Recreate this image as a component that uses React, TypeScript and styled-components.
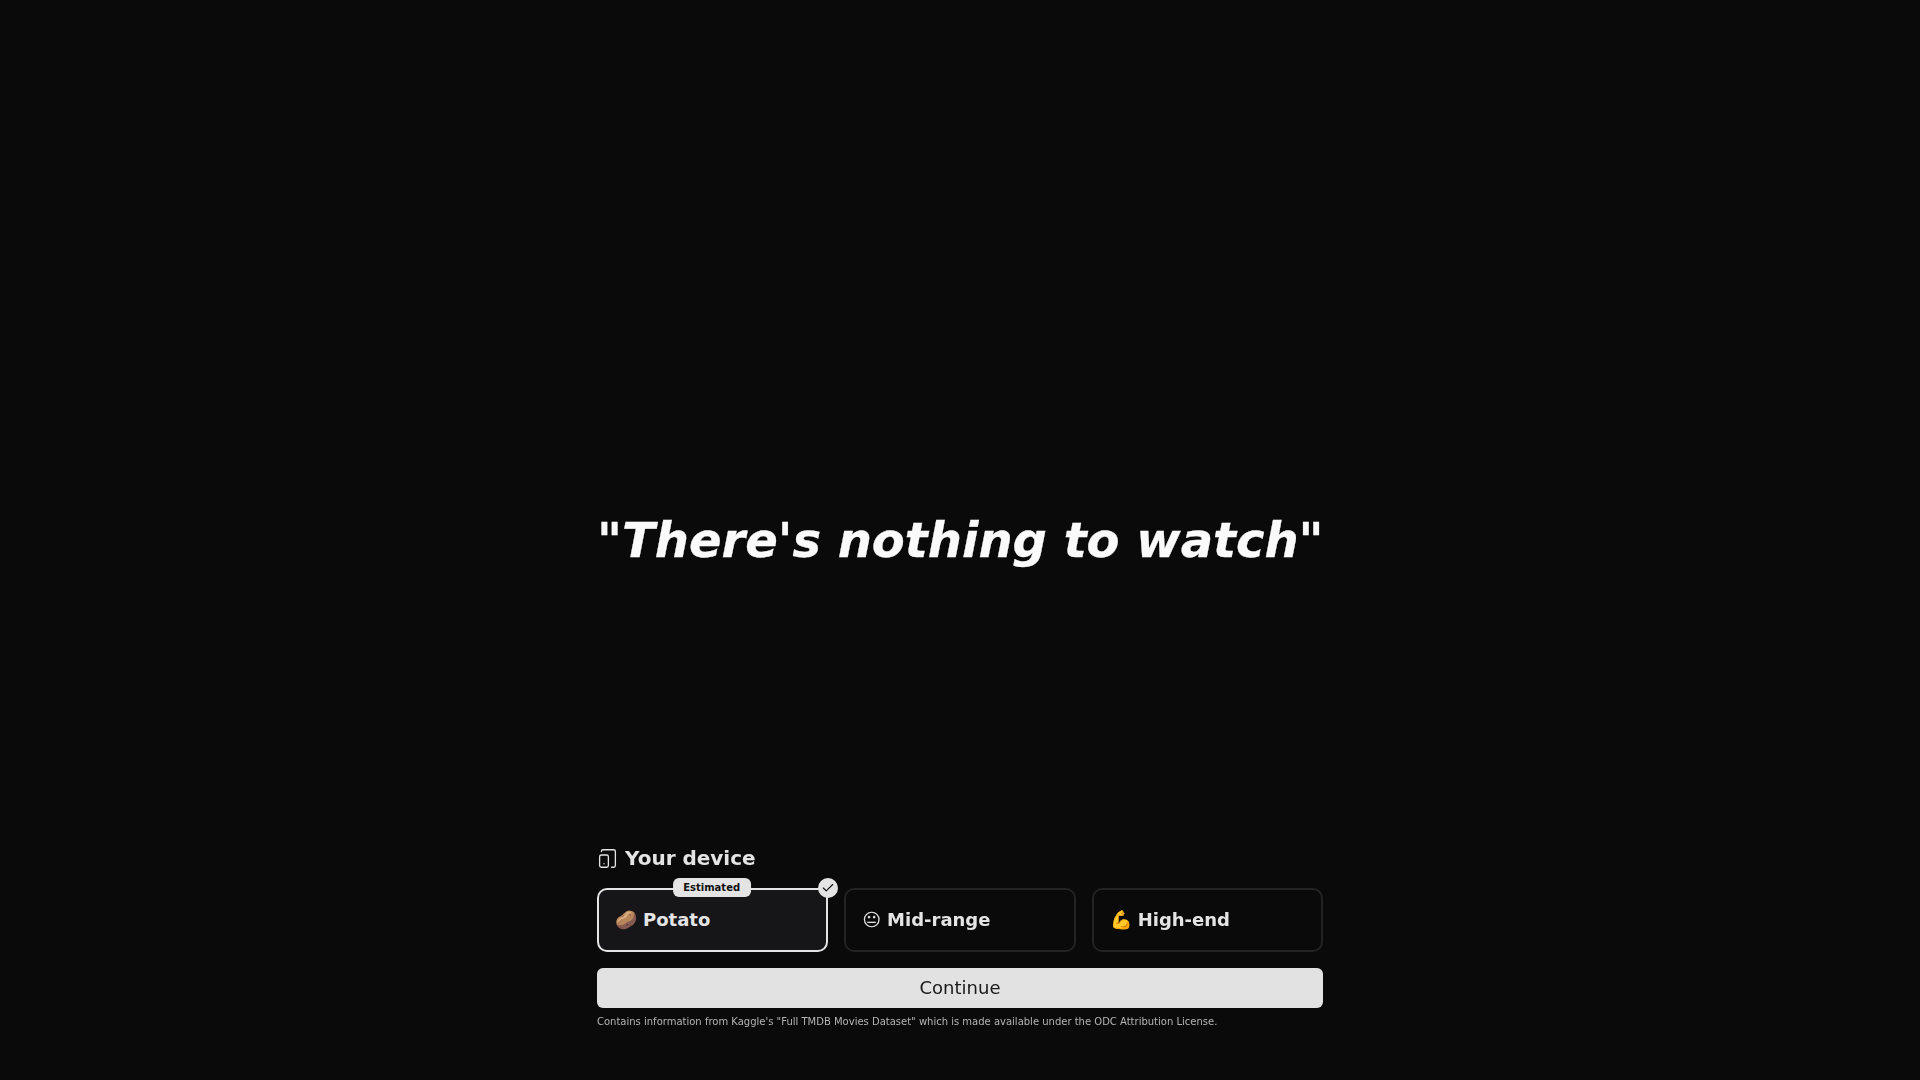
import { Check, TabletSmartphone } from "lucide-react";
import styled, { createGlobalStyle } from "styled-components";

const GlobalStyle = createGlobalStyle`
  html, body {
    margin: 0;
    background: #0a0a0a;
    color: #e4e4e4;
    font-family: "DejaVu Sans", sans-serif;
  }
  * {
    box-sizing: border-box;
  }
`;

const Page = styled.main`
  height: 100vh;
  display: grid;
  grid-template-rows: 1fr auto 1fr;
  justify-items: center;
  will-change: opacity;
`;

const Title = styled.h1`
  grid-row: 2;
  width: 726px;
  margin: 0;
  font-size: 48px;
  line-height: 60px;
  font-weight: 700;
  text-align: center;
  white-space: nowrap;
  color: #fafafa;
  -webkit-text-stroke: 0.3px #fafafa;

  em {
    font-style: italic;
  }
`;

const Form = styled.section`
  grid-row: 3;
  align-self: end;
  width: 726px;
  padding-bottom: 50px;
`;

const Heading = styled.h2`
  display: flex;
  align-items: center;
  gap: 7px;
  margin: 0 0 16px;
  font-size: 20px;
  line-height: 28px;
  font-weight: 700;
  color: #e4e4e4;
`;

const Options = styled.div`
  display: grid;
  grid-template-columns: repeat(3, 1fr);
  gap: 16px;
  margin-bottom: 16px;
`;

const Option = styled.button<{ $selected?: boolean }>`
  position: relative;
  height: 64px;
  padding: 0 16px 2px;
  display: flex;
  align-items: center;
  gap: 6px;
  border: 2px solid ${(props) => (props.$selected ? "#e4e4e4" : "#232325")};
  border-radius: 10px;
  background: ${(props) => (props.$selected ? "#161618" : "transparent")};
  color: #e4e4e4;
  font-family: inherit;
  font-size: 18px;
  font-weight: 700;
`;

const Badge = styled.span`
  position: absolute;
  top: -12px;
  left: calc(50% - 1px);
  transform: translateX(-50%);
  padding: 0 10.5px;
  height: 19px;
  line-height: 19px;
  border-radius: 6px;
  background: #e4e4e4;
  color: #111;
  font-size: 10px;
  font-weight: 700;
`;

const Tick = styled.span`
  position: absolute;
  top: -12px;
  right: -12px;
  width: 20px;
  height: 20px;
  border-radius: 50%;
  background: #e4e4e4;
  color: #111;
  display: flex;
  align-items: center;
  justify-content: center;
`;

const Continue = styled.button`
  width: 100%;
  height: 40px;
  padding: 0 0 2px;
  border: 0;
  border-radius: 6px;
  background: #e2e2e2;
  color: #1a1a1a;
  font-family: inherit;
  font-size: 18px;
`;

const Note = styled.p`
  margin: 6px 0 0;
  font-size: 10px;
  line-height: 16px;
  color: #b4b4b4;
`;

export default function App() {
  return (
    <Page>
      <GlobalStyle />
      <Title>
        "<em>There's nothing to watch</em>"
      </Title>
      <Form>
        <Heading>
          <TabletSmartphone size={21} strokeWidth={1.5} />
          Your device
        </Heading>
        <Options>
          <Option $selected>
            <Badge>Estimated</Badge>
            <Tick>
              <Check size={14} />
            </Tick>
            <span>🥔</span> Potato
          </Option>
          <Option>
            <span>😐</span> Mid-range
          </Option>
          <Option>
            <span>💪</span> High-end
          </Option>
        </Options>
        <Continue>Continue</Continue>
        <Note>
          Contains information from Kaggle's "Full TMDB Movies Dataset" which is made available under the ODC
          Attribution License.
        </Note>
      </Form>
    </Page>
  );
}
